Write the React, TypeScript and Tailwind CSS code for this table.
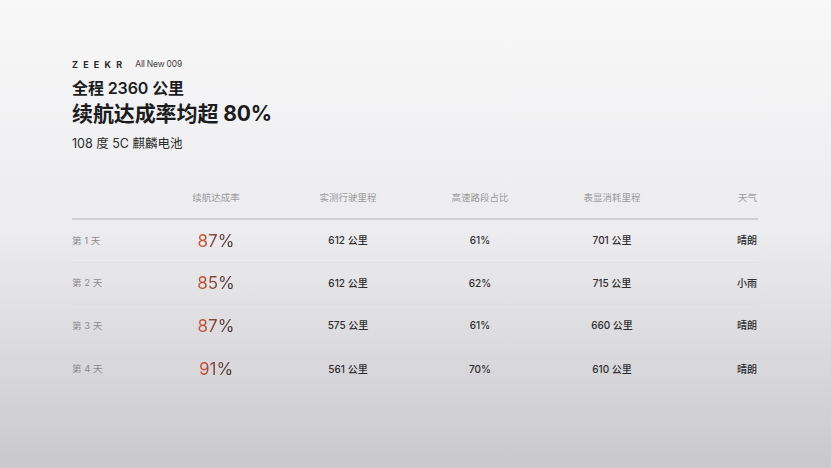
import React from 'react'

const rows = [
  { day: '第 1 天', rate: '87%', actual: '612 公里', highway: '61%', shown: '701 公里', weather: '晴朗' },
  { day: '第 2 天', rate: '85%', actual: '612 公里', highway: '62%', shown: '715 公里', weather: '小雨' },
  { day: '第 3 天', rate: '87%', actual: '575 公里', highway: '61%', shown: '660 公里', weather: '晴朗' },
  { day: '第 4 天', rate: '91%', actual: '561 公里', highway: '70%', shown: '610 公里', weather: '晴朗' },
]

const font = { fontFamily: 'Inter, "Noto Sans CJK SC", sans-serif' }

export default function App() {
  return (
    <div
      className="w-[831px] h-[468px] overflow-hidden bg-gradient-to-b from-[#f8f8f9] via-[#ececee] to-[#c9c8cd] text-[#1c1c1e]"
      style={font}
    >
      <div className="pl-[72px] pr-[73px] pt-[59px]">
        {/* Header */}
        <div className="flex items-center gap-[8px] h-[10px]">
          <span className="text-[9px] font-bold tracking-[5.2px] leading-none text-[#2a2a2a]">ZEEKR</span>
          <span className="text-[8.5px] leading-none text-[#444] tracking-[-0.2px]">All New 009</span>
        </div>
        <h2 className="mt-[9px] text-[16px] font-semibold leading-[20px] tracking-[-0.1px]">全程 2360 公里</h2>
        <h1 className="mt-[2px] text-[21px] font-bold leading-[28px] tracking-[-0.1px]">续航达成率均超 80%</h1>
        <p className="mt-[8px] text-[12.5px] leading-[16px] text-[#2a2a2a]">108 度 5C 麒麟电池</p>

        {/* Table */}
        <div className="mt-[39px]">
          <div className="grid grid-cols-[78px_132px_132px_132px_132px_80px] text-[9.5px] text-[#9a9a9e] h-[28px] items-start">
            <span />
            <span className="text-center">续航达成率</span>
            <span className="text-center">实测行驶里程</span>
            <span className="text-center">高速路段占比</span>
            <span className="text-center">表显消耗里程</span>
            <span className="text-right pr-[1px]">天气</span>
          </div>
          <div className="h-[2px] bg-[#cfcfd3] mt-[-1px]" />
          {rows.map((r, i) => (
            <div
              key={r.day}
              className={`grid grid-cols-[78px_132px_132px_132px_132px_80px] items-center h-[42.6px] ${
                i < rows.length - 1 ? 'border-b border-dotted border-[#dcdce0]' : ''
              }`}
            >
              <span className="text-[9.5px] text-[#8a8a8e]">{r.day}</span>
              <span className="text-center">
                <span className="text-[17px] leading-none bg-gradient-to-r from-[#dc5530] via-[#7a4038] to-[#363638] bg-clip-text text-transparent">
                  {r.rate}
                </span>
              </span>
              <span className="text-center text-[10px] font-medium text-[#2e2e30]">{r.actual}</span>
              <span className="text-center text-[10px] font-medium text-[#2e2e30]">{r.highway}</span>
              <span className="text-center text-[10px] font-medium text-[#2e2e30]">{r.shown}</span>
              <span className="text-right text-[10px] font-medium text-[#2e2e30] pr-[1px]">{r.weather}</span>
            </div>
          ))}
        </div>
      </div>
    </div>
  )
}
